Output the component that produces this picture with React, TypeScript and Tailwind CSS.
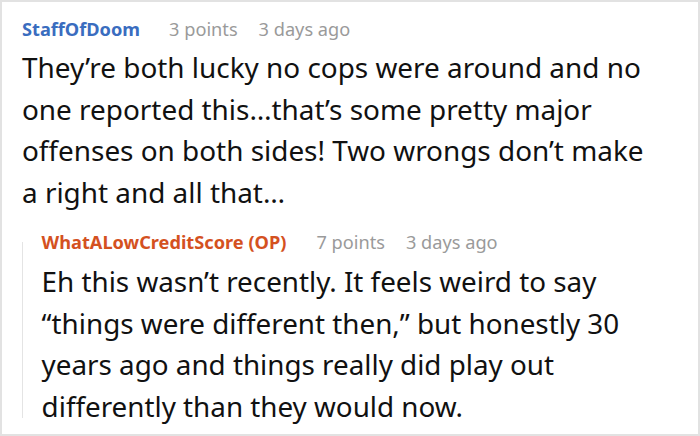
export default function App() {
  const font = { fontFamily: '"Noto Sans", "Open Sans", sans-serif' };
  return (
    <div
      style={font}
      className="w-[700px] h-[436px] box-border border-2 border-[#e2e2e2] bg-white pl-[20px] pt-[16px] overflow-hidden"
    >
      {/* top comment */}
      <div className="flex items-center h-[24px] text-[18.2px]">
        <span className="font-bold text-[#3a6dbf]">StaffOfDoom</span>
        <span className="ml-[29px] text-[#9a9a9a]">3 points</span>
        <span className="ml-[21px] text-[#9a9a9a]">3 days ago</span>
      </div>
      <p className="mt-[5px] text-[27.9px] leading-[41.5px] text-[#111] pr-[44px]">
        They’re both lucky no cops were around and no one reported this…that’s some pretty major offenses on both sides! Two wrongs don’t make a right and all that…
      </p>

      {/* reply */}
      <div className="flex mt-[18px]">
        <div className="w-[2px] self-start mt-[11px] h-[176px] bg-[#e4e4e4]" />
        <div className="pl-[19px]">
          <div className="flex items-center h-[24px] text-[18.2px]">
            <span className="font-bold text-[#d4511f]">WhatALowCreditScore (OP)</span>
            <span className="ml-[30px] text-[#9a9a9a]">7 points</span>
            <span className="ml-[21px] text-[#9a9a9a]">3 days ago</span>
          </div>
          <p className="mt-[6px] text-[27.8px] leading-[41.5px] text-[#111] pr-[60px]">
            Eh this wasn’t recently. It feels weird to say “things were different then,” but honestly 30 years ago and things really did play out differently than they would now.
          </p>
        </div>
      </div>
    </div>
  );
}
